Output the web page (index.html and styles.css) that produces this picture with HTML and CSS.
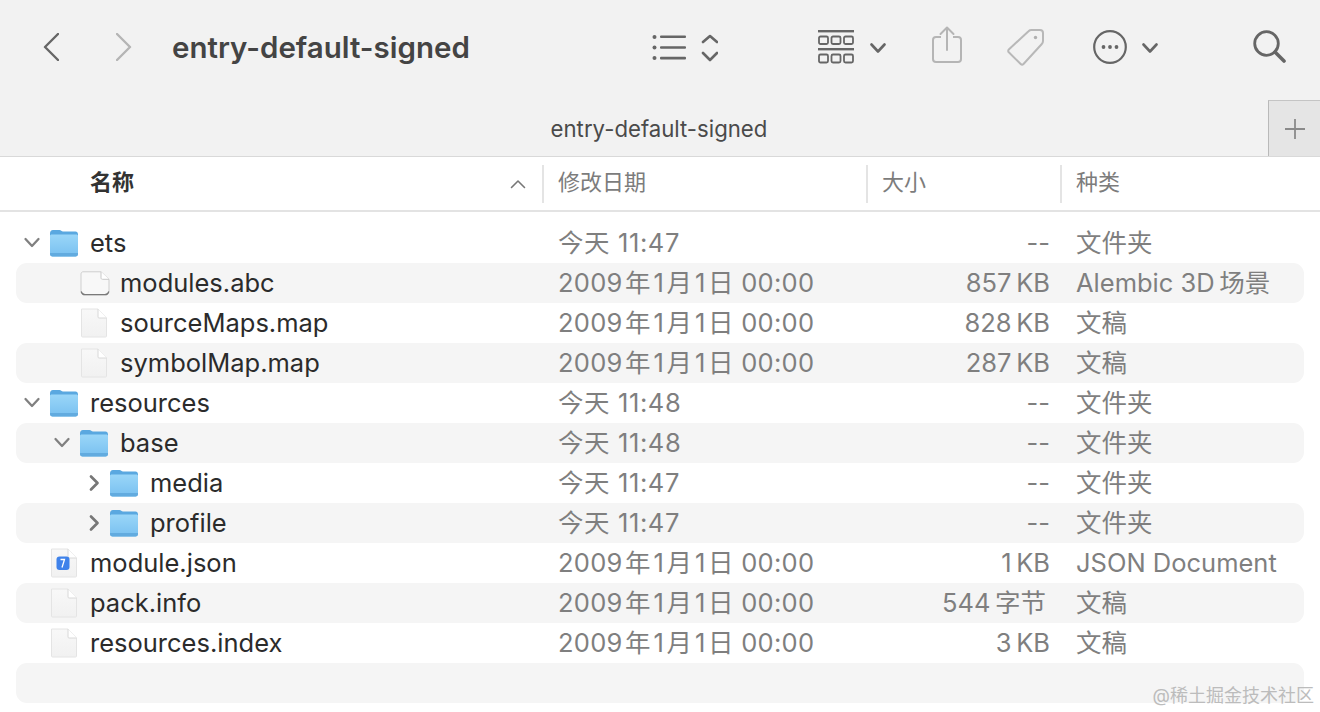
FILE: index.html
```html
<!DOCTYPE html>
<html lang="zh-CN">
<head>
  <meta charset="UTF-8">
  <meta name="viewport" content="width=device-width, initial-scale=1.0">
  <title>entry-default-signed</title>
  <link rel="stylesheet" href="styles.css">
</head>
<body>
  <svg class="defs" width="0" height="0" aria-hidden="true">
    <defs>
      <linearGradient id="folderFill" x1="0" y1="0" x2="0" y2="1">
        <stop offset="0" stop-color="#9ad6f8"/>
        <stop offset="1" stop-color="#78c0f0"/>
      </linearGradient>
      <linearGradient id="docFill" x1="0" y1="0" x2="0" y2="1">
        <stop offset="0" stop-color="#f8f8f8"/>
        <stop offset="1" stop-color="#f1f1f1"/>
      </linearGradient>
      <symbol id="folder" viewBox="0 0 28 28">
        <path d="M0 4.500C0 2.500 1 1 3 1h6.500c1.500 0 2 1.500 3.500 1.500H25.500C27 2.500 28 3.500 28 5.500V8H0z" fill="#5aa8e0"/>
        <path d="M0 7c0-1 .8-1.500 1.800-1.500h24.400c1 0 1.800.5 1.800 1.500v18c0 1.600-1 2.500-2.500 2.500h-23C1 27.500 0 26.600 0 25z" fill="url(#folderFill)"/>
        <path d="M0 24h28v1c0 1.600-1 2.500-2.500 2.500h-23C1 27.500 0 26.600 0 25z" fill="#62abdf"/>
      </symbol>
      <symbol id="doc" viewBox="0 0 28 30">
        <path d="M1.500 1h16.500l8.500 9v18c0 .5-.4 1-1 1h-23c-.6 0-1-.5-1-1z" fill="url(#docFill)" stroke="#e4e4e4"/>
        <path d="M18 1v8c0 .6.400 1 1 1h7.500" fill="#fff" stroke="#d8d8d8"/>
      </symbol>
      <symbol id="abc" viewBox="0 0 30 25">
        <path d="M3 .8h18l8 7.500V20c0 2.200-1.500 3.800-3.500 3.800h-21C2.500 23.800 1 22.200 1 20V3C1 1.800 1.800.8 3 .8z" fill="#f8f8f8" stroke="#cfcfcf"/>
        <path d="M21 .8v6c0 1 .6 1.500 1.500 1.500H29" fill="#fff" stroke="#c8c8c8"/>
        <path d="M1.200 20.500c.5 2 1.800 3.200 3.800 3.200h20c2 0 3.300-1.200 3.800-3.200" fill="none" stroke="#7a7a7a" stroke-width="1.200"/>
      </symbol>
      <symbol id="json" viewBox="0 0 28 30">
        <path d="M1.500 1h16.500l8.500 9v18c0 .5-.4 1-1 1h-23c-.6 0-1-.5-1-1z" fill="url(#docFill)" stroke="#e4e4e4"/>
        <path d="M18 1v8c0 .6.400 1 1 1h7.500" fill="#fff" stroke="#d8d8d8"/>
        <rect x="6.500" y="8.500" width="13" height="13.500" rx="3" fill="#3f82ea"/>
        <path d="M10.500 11.500h4l-2.500 8" fill="none" stroke="#fff" stroke-width="1.300"/>
      </symbol>
      <symbol id="chevDown" viewBox="0 0 20 14">
        <path d="M3.500 3l6.500 7 6.500-7" fill="none" stroke="#808080" stroke-width="2.300" stroke-linecap="round" stroke-linejoin="round"/>
      </symbol>
      <symbol id="chevRight" viewBox="0 0 20 20">
        <path d="M9 3.500l6.500 6.500L9 16.500" fill="none" stroke="#777" stroke-width="2.700" stroke-linecap="round" stroke-linejoin="round"/>
      </symbol>
      <symbol id="toolChev" viewBox="0 0 16 10">
        <path d="M1.500 1.500L8 8.500l6.500-7" fill="none" stroke="#666" stroke-width="2.600" stroke-linecap="round" stroke-linejoin="round"/>
      </symbol>
    </defs>
  </svg>

  <div class="window">
    <header class="toolbar">
      <svg class="nav" width="16" height="28" viewBox="0 0 16 28"><path d="M15 1L2 14l13 13" fill="none" stroke="#666" stroke-width="2.400" stroke-linecap="round" stroke-linejoin="round"/></svg>
      <svg class="nav nav-next" width="16" height="28" viewBox="0 0 16 28"><path d="M1 1l13 13L1 27" fill="none" stroke="#b5b5b5" stroke-width="2.400" stroke-linecap="round" stroke-linejoin="round"/></svg>
      <h1 class="folder-title">entry-default-signed</h1>

      <svg class="tool tool-list" width="66" height="28" viewBox="0 0 66 28">
        <g fill="#666">
          <circle cx="2.500" cy="3" r="2"/><circle cx="2.500" cy="13.500" r="2"/><circle cx="2.500" cy="24" r="2"/>
          <rect x="8" y="1.500" width="26" height="2.600" rx="1"/><rect x="8" y="12.200" width="26" height="2.600" rx="1"/><rect x="8" y="22.800" width="26" height="2.600" rx="1"/>
        </g>
        <path d="M51 8l7-6 7 6M51 19l7 7 7-7" fill="none" stroke="#666" stroke-width="2.600" stroke-linecap="round" stroke-linejoin="round"/>
      </svg>

      <svg class="tool tool-grid" width="36" height="34" viewBox="0 0 36 34">
        <g fill="#666"><rect x="0" y="0" width="36" height="2.400"/><rect x="0" y="18" width="36" height="2.400"/></g>
        <g fill="none" stroke="#666" stroke-width="1.800">
          <rect x="1" y="6.500" width="9" height="7.500" rx="1.500"/><rect x="13.500" y="6.500" width="9" height="7.500" rx="1.500"/><rect x="26" y="6.500" width="9" height="7.500" rx="1.500"/>
          <rect x="1" y="24.500" width="9" height="8" rx="1.500"/><rect x="13.500" y="24.500" width="9" height="8" rx="1.500"/><rect x="26" y="24.500" width="9" height="8" rx="1.500"/>
        </g>
      </svg>
      <svg class="tool tool-chev" width="16" height="10"><use href="#toolChev"/></svg>

      <svg class="tool tool-share" width="30" height="38" viewBox="0 0 30 38">
        <path d="M9 11H4c-2 0-3 1-3 3v19c0 2 1 3 3 3h22c2 0 3-1 3-3V14c0-2-1-3-3-3h-5" fill="none" stroke="#b5b5b5" stroke-width="2"/>
        <path d="M15 24V2M8.500 8L15 1.500 21.500 8" fill="none" stroke="#b5b5b5" stroke-width="2" stroke-linecap="round" stroke-linejoin="round"/>
      </svg>

      <svg class="tool tool-tag" width="38" height="38" viewBox="0 0 38 38">
        <path d="M1.800 21.500L21.500 3.200c.8-.8 1.800-1.200 3-1.200H33c1.700 0 3 1.300 3 3v8c0 1.200-.4 2.200-1.200 3L16.500 36c-.8.800-2 .8-2.800 0L1.800 24.300c-.8-.8-.8-2 0-2.800z" fill="none" stroke="#b8b8b8" stroke-width="2"/>
        <circle cx="28.500" cy="9.500" r="1.700" fill="#b0b0b0"/>
      </svg>

      <svg class="tool tool-more" width="34" height="34" viewBox="0 0 34 34">
        <circle cx="17" cy="17" r="15.800" fill="none" stroke="#666" stroke-width="2.200"/>
        <g fill="#666"><circle cx="10.500" cy="17" r="1.900"/><circle cx="17" cy="17" r="1.900"/><circle cx="23.500" cy="17" r="1.900"/></g>
      </svg>
      <svg class="tool tool-chev tool-chev-more" width="16" height="10"><use href="#toolChev"/></svg>

      <svg class="tool tool-search" width="33" height="33" viewBox="0 0 33 33">
        <circle cx="13.500" cy="13.500" r="11.800" fill="none" stroke="#666" stroke-width="2.800"/>
        <path d="M22 22l9 9" fill="none" stroke="#666" stroke-width="3.600" stroke-linecap="round"/>
      </svg>
    </header>

    <div class="tabbar">
      <div class="tab-title">entry-default-signed</div>
      <div class="tab-add">
        <svg width="22" height="22" viewBox="0 0 22 22"><path d="M11 1v20M1 11h20" fill="none" stroke="#8a8a8a" stroke-width="1.800"/></svg>
      </div>
    </div>

    <div class="col-header">
      <div class="col col-name">名称
        <svg class="sort" width="16" height="10" viewBox="0 0 16 10"><path d="M1.500 8.500L8 2l6.500 6.500" fill="none" stroke="#777" stroke-width="1.600" stroke-linecap="round" stroke-linejoin="round"/></svg>
      </div>
      <div class="col col-date">修改日期</div>
      <div class="col col-size">大小</div>
      <div class="col col-kind">种类</div>
    </div>

    <div class="list">
      <div class="row">
        <div class="name">
          <svg class="disc" width="20" height="14"><use href="#chevDown"/></svg>
          <svg class="icon" width="28" height="28"><use href="#folder"/></svg>
          <span>ets</span>
        </div>
        <div class="date today">今天 11:47</div><div class="size">--</div><div class="kind">文件夹</div>
      </div>
      <div class="row stripe">
        <div class="name lvl1">
          <span class="disc"></span>
          <svg class="icon icon-wide" width="30" height="25"><use href="#abc"/></svg>
          <span>modules.abc</span>
        </div>
        <div class="date">2009&#8202;年&#8202;1&#8202;月&#8202;1&#8202;日 00:00</div><div class="size">857&thinsp;KB</div><div class="kind">Alembic 3D&thinsp;场景</div>
      </div>
      <div class="row">
        <div class="name lvl1">
          <span class="disc"></span>
          <svg class="icon" width="28" height="30"><use href="#doc"/></svg>
          <span>sourceMaps.map</span>
        </div>
        <div class="date">2009&#8202;年&#8202;1&#8202;月&#8202;1&#8202;日 00:00</div><div class="size">828&thinsp;KB</div><div class="kind">文稿</div>
      </div>
      <div class="row stripe">
        <div class="name lvl1">
          <span class="disc"></span>
          <svg class="icon" width="28" height="30"><use href="#doc"/></svg>
          <span>symbolMap.map</span>
        </div>
        <div class="date">2009&#8202;年&#8202;1&#8202;月&#8202;1&#8202;日 00:00</div><div class="size">287&thinsp;KB</div><div class="kind">文稿</div>
      </div>
      <div class="row">
        <div class="name">
          <svg class="disc" width="20" height="14"><use href="#chevDown"/></svg>
          <svg class="icon" width="28" height="28"><use href="#folder"/></svg>
          <span>resources</span>
        </div>
        <div class="date today">今天 11:48</div><div class="size">--</div><div class="kind">文件夹</div>
      </div>
      <div class="row stripe">
        <div class="name lvl1">
          <svg class="disc" width="20" height="14"><use href="#chevDown"/></svg>
          <svg class="icon" width="28" height="28"><use href="#folder"/></svg>
          <span>base</span>
        </div>
        <div class="date today">今天 11:48</div><div class="size">--</div><div class="kind">文件夹</div>
      </div>
      <div class="row">
        <div class="name lvl2">
          <svg class="disc" width="20" height="20"><use href="#chevRight"/></svg>
          <svg class="icon" width="28" height="28"><use href="#folder"/></svg>
          <span>media</span>
        </div>
        <div class="date today">今天 11:47</div><div class="size">--</div><div class="kind">文件夹</div>
      </div>
      <div class="row stripe">
        <div class="name lvl2">
          <svg class="disc" width="20" height="20"><use href="#chevRight"/></svg>
          <svg class="icon" width="28" height="28"><use href="#folder"/></svg>
          <span>profile</span>
        </div>
        <div class="date today">今天 11:47</div><div class="size">--</div><div class="kind">文件夹</div>
      </div>
      <div class="row">
        <div class="name">
          <span class="disc"></span>
          <svg class="icon" width="28" height="30"><use href="#json"/></svg>
          <span>module.json</span>
        </div>
        <div class="date">2009&#8202;年&#8202;1&#8202;月&#8202;1&#8202;日 00:00</div><div class="size">1&thinsp;KB</div><div class="kind">JSON Document</div>
      </div>
      <div class="row stripe">
        <div class="name">
          <span class="disc"></span>
          <svg class="icon" width="28" height="30"><use href="#doc"/></svg>
          <span>pack.info</span>
        </div>
        <div class="date">2009&#8202;年&#8202;1&#8202;月&#8202;1&#8202;日 00:00</div><div class="size size-bytes">544&thinsp;字节</div><div class="kind">文稿</div>
      </div>
      <div class="row">
        <div class="name">
          <span class="disc"></span>
          <svg class="icon" width="28" height="30"><use href="#doc"/></svg>
          <span>resources.index</span>
        </div>
        <div class="date">2009&#8202;年&#8202;1&#8202;月&#8202;1&#8202;日 00:00</div><div class="size">3&thinsp;KB</div><div class="kind">文稿</div>
      </div>
      <div class="row stripe"></div>
    </div>

    <div class="watermark">@稀土掘金技术社区</div>
  </div>
</body>
</html>
```

FILE: styles.css
```css
html, body {
  margin: 0;
  height: 100%;
}
body {
  font-family: Inter, "Noto Sans CJK SC", sans-serif;
  background-color: white;
  color: #2b2b2b;
  overflow: hidden;
}
.defs {
  position: absolute;
}
.window {
  position: relative;
  height: 712px;
  overflow: hidden;
}

/* toolbar */
.toolbar {
  height: 100px;
  background-color: #f2f2f2;
  display: flex;
  align-items: flex-start;
  padding-left: 43px;
}
.toolbar svg {
  flex: none;
}
.nav {
  margin-top: 33px;
}
.nav-next {
  margin-left: 57px;
}
.folder-title {
  margin: 28px 0 0 40px;
  width: 298px;
  font-size: 29.5px;
  line-height: 38px;
  font-weight: 600;
  color: #444;
  white-space: nowrap;
}
.tool-list {
  margin: 34px 0 0 182px;
}
.tool-grid {
  margin: 30px 0 0 100px;
}
.tool-chev {
  margin: 43px 0 0 16px;
}
.tool-share {
  margin: 26px 0 0 46px;
}
.tool-tag {
  margin: 28px 0 0 45px;
}
.tool-more {
  margin: 30px 0 0 48px;
}
.tool-chev-more {
  margin-left: 15px;
}
.tool-search {
  margin: 30px 0 0 95px;
}

/* tab bar */
.tabbar {
  height: 56px;
  background-color: #f2f2f2;
  border-bottom: 1px solid #d9d9d9;
  display: flex;
}
.tab-title {
  flex: 1;
  padding-left: 50px;
  text-align: center;
  font-size: 22.2px;
  line-height: 57px;
  color: #4a4a4a;
}
.tab-add {
  width: 51px;
  background-color: #e5e5e5;
  border-left: 1px solid #b9b9b9;
  border-top: 1px solid #c4c4c4;
  display: flex;
  align-items: center;
  justify-content: center;
}

/* column header */
.col-header {
  height: 53px;
  border-bottom: 2px solid #e3e3e3;
  padding-left: 16px;
  display: grid;
  grid-template-columns: 526px 324px 194px 1fr;
  align-items: center;
  font-size: 22px;
  color: #7c7c7c;
}
.col {
  height: 38px;
  line-height: 35px;
  border-left: 2px solid #e4e4e4;
  padding-left: 14px;
}
.col-name {
  border-left: none;
  padding-left: 74px;
  padding-right: 16px;
  font-weight: 700;
  color: #333;
  display: flex;
  align-items: flex-start;
  justify-content: space-between;
}
.sort {
  margin-top: 14px;
}

/* file rows */
.list {
  padding: 11px 16px 0;
}
.row {
  height: 40px;
  line-height: 40px;
  display: grid;
  grid-template-columns: 526px 324px 194px 1fr;
  align-items: center;
  border-radius: 11px;
  font-size: 25.5px;
  color: #7f7f7f;
  white-space: nowrap;
}
.stripe {
  background-color: #f5f5f5;
}
.name {
  display: flex;
  align-items: center;
  padding-left: 6px;
  color: #2b2b2b;
}
.lvl1 {
  padding-left: 36px;
}
.lvl2 {
  padding-left: 66px;
}
.disc {
  width: 20px;
  flex: none;
  margin-right: 8px;
}
.icon {
  flex: none;
  margin-right: 12px;
}
.icon-wide {
  margin-right: 10px;
}
.date {
  padding-left: 16px;
  letter-spacing: 0.25px;
}
.today {
  letter-spacing: 0.6px;
}
.size {
  text-align: right;
  padding-right: 10px;
}
.size-bytes {
  padding-right: 14px;
}
.kind {
  padding-left: 16px;
}

.watermark {
  position: absolute;
  right: 6px;
  bottom: 5px;
  font-size: 18px;
  line-height: 22px;
  color: #bcbcbc;
}
```
